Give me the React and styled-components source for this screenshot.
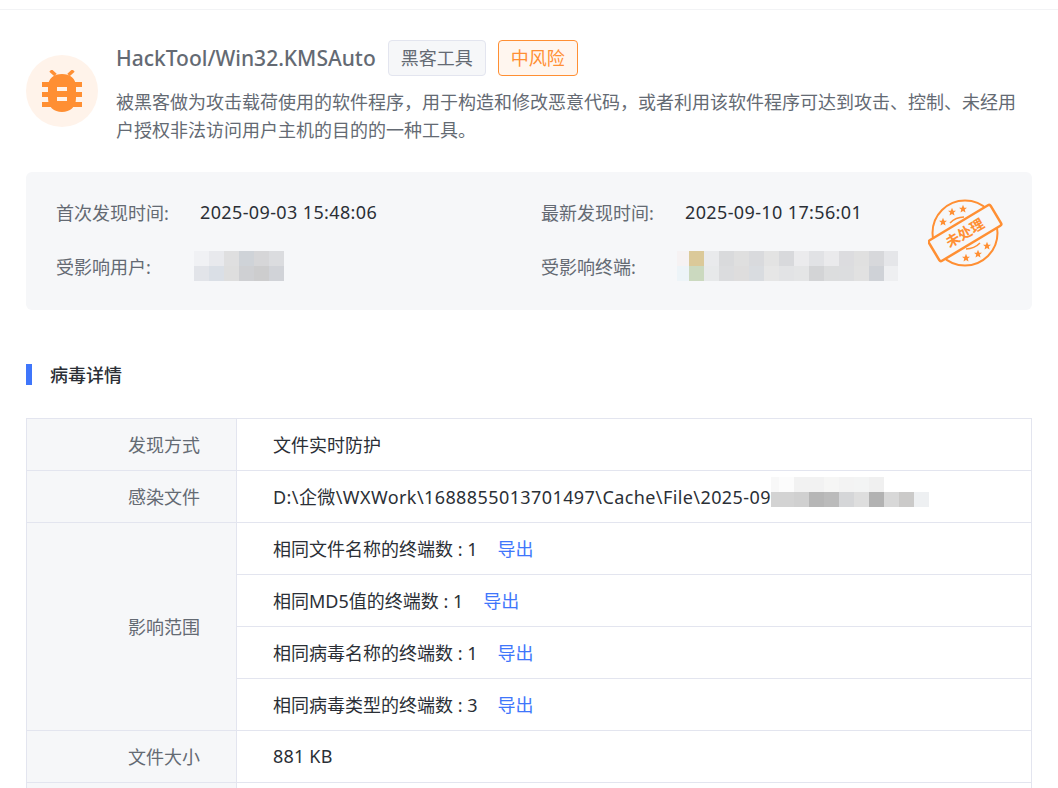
import React from "react";
import styled, { createGlobalStyle } from "styled-components";

const font = `"Noto Sans", "Noto Sans CJK SC", sans-serif`;

const GlobalStyle = createGlobalStyle`
  html, body {
    margin: 0;
    height: 788px;
    overflow: hidden;
    background: #fff;
    font-family: ${font};
  }
`;

const Page = styled.main`
  border-top: 1px solid #f2f3f5;
  margin-top: 9px;
  padding: 30px 26px 0;
`;

const Header = styled.header`
  display: flex;
  gap: 18px;
`;

const IconCircle = styled.div`
  width: 72px;
  height: 72px;
  margin-top: 15px;
  flex: none;
  border-radius: 50%;
  background: #fff3ea;
  display: flex;
  align-items: center;
  justify-content: center;
`;

const HeaderBody = styled.div`
  flex: 1;
`;

const TitleRow = styled.div`
  display: flex;
  align-items: center;
  gap: 12px;
  height: 36px;
`;

const Title = styled.h1`
  margin: 0;
  font-size: 21px;
  font-weight: 500;
  color: #646a73;
  line-height: 36px;
`;

const Tag = styled.span`
  box-sizing: border-box;
  height: 36px;
  line-height: 34px;
  padding: 0 12px;
  border-radius: 4px;
  font-size: 18px;
  border: 1px solid ${(p) => (p.$risk ? "#ff8f33" : "#e3e5ef")};
  background: ${(p) => (p.$risk ? "#fff6ef" : "#f6f7f9")};
  color: ${(p) => (p.$risk ? "#ff8f33" : "#646a73")};
`;

const Desc = styled.p`
  margin: 12px 0 0;
  width: 908px;
  font-size: 18px;
  line-height: 28px;
  color: #646a73;
`;

const InfoPanel = styled.section`
  position: relative;
  box-sizing: border-box;
  height: 138px;
  margin-top: 28px;
  padding: 13px 30px;
  background: #f6f7f9;
  border-radius: 6px;
  display: grid;
  grid-template-columns: 485px 1fr;
  grid-auto-rows: 54px;
`;

const InfoItem = styled.div`
  display: flex;
  align-items: center;
  font-size: 18px;
  color: #2b2f36;
`;

const InfoLabel = styled.span`
  width: ${(p) => p.$w || 144}px;
  flex: none;
  color: #646a73;
`;

const Latin = styled.span`
  letter-spacing: ${(p) => p.$spacing || 0.37}px;
`;

const Mosaic = styled.div`
  display: grid;
  grid-template-columns: ${(p) => p.$cols};
  grid-auto-rows: 15px;
  margin-bottom: ${(p) => p.$lift || 0}px;
`;

const MosaicCell = styled.i`
  display: block;
  background: ${(p) => p.$c};
`;

const StampWrap = styled.div`
  position: absolute;
  right: 26px;
  top: 26px;
`;

const SectionTitle = styled.h2`
  margin: 54px 0 0;
  height: 21px;
  line-height: 23px;
  border-left: 6px solid #3f76fb;
  padding-left: 18px;
  font-size: 18px;
  font-weight: 500;
  color: #2b2f36;
`;

const Table = styled.table`
  width: 100%;
  margin-top: 33px;
  border-collapse: collapse;
  table-layout: fixed;
  font-size: 18px;
  td, th {
    height: 49px;
    padding: 0 0 2px;
    border: 1px solid #e3e5ef;
    font-weight: 400;
  }
`;

const Th = styled.th`
  width: 210px;
  box-sizing: border-box;
  padding-right: 36px !important;
  text-align: right;
  background: #f6f7f9;
  color: #646a73;
`;

const Td = styled.td`
  padding-left: 36px !important;
  color: #2b2f36;
  white-space: nowrap;
  overflow: hidden;
`;

const PathCell = styled.div`
  display: flex;
  align-items: center;
`;

const ExportLink = styled.a`
  margin-left: 20px;
  color: #3f76fb;
  cursor: pointer;
`;

const userCells = ["#f0f1f4","#e8e9ed","#dfdfe0","#cfd3d8","#d6d6d8","#dbdcdf","#e2e4e9","#dadfe6","#dedede","#cfd0d3","#cdcdce","#d1d3d8"];
const terminalCells = [
  "#f6f2f3","#dbc999","#e9eaec","#d9dadc","#dfdfdf","#d9dadd","#e3e3e3","#d8d9dc","#ebebed","#e1e2e5","#eaeaec","#dcdcdf","#e0e0e0","#d7d8db","#e5e6e9",
  "#edf4f8","#cbd9bf","#e7e9ea","#dbdcde","#dedddd","#d9dce0","#e6e6e6","#e2e3e5","#e4e5e6","#d3d4d6","#dcddde","#dcdddf","#e1e1e1","#cfd2d7","#eeeff1",
];
const pathCells = [
  "#f8f8f8","#fcfcfc","#f2f2f2","#f2f2f2","#f6f6f5","#f3f3f3","#f3f4f4","#f0f0f0","#fff","#fff","#fff",
  "#d3d3d3","#d3d3d3","#d0d0d0","#b6b6b6","#bbb","#d5d6d8","#dedede","#b2b2b2","#d8d8d8","#cbcac9","#eef0f2",
];

const BugIcon = () => (
  <svg width="40" height="43" viewBox="0 0 40 43" fill="#ff8f33">
    <path d="M0 12h40v5H0zM0 22h40v5H0zM0 32h40v5H0z" />
    <path d="M8.500 0.500 13.500 5M31.500 0.500 26.500 5" stroke="#ff8f33" strokeWidth="3.500" />
    <path
      fillRule="evenodd"
      d="M6 17C6 8 12 4 20 4s14 4 14 13v11c0 9-6 14-14 14S6 37 6 28zM15 16v5h10v-5zM15 27v4h10v-4z"
    />
  </svg>
);

const Star = ({ x, y }) => (
  <path
    transform={`translate(${x} ${y}) scale(0.42)`}
    d="M0-10 2.900-3.100 9.500-3.100 4.300 1.400 5.900 8.100 0 4.500-5.900 8.100-4.300 1.400-9.500-3.100-2.900-3.100z"
  />
);

const StampText = styled.text`
  font-family: "Noto Sans CJK SC", sans-serif;
  font-size: 14px;
  font-weight: 700;
  fill: #ff8f33;
`;

const Stamp = () => (
  <svg width="78" height="70" viewBox="0 0 78 70">
    <g fill="none" stroke="#ff8f33">
      <circle cx="37" cy="35" r="32.500" strokeWidth="2" />
      <path d="M22 25a20 20 0 0 1 14-6M52 45a20 20 0 0 1-14 6" strokeWidth="1.500" />
    </g>
    <g fill="#ff8f33">
      <Star x={15} y={24} />
      <Star x={24} y={14} />
      <Star x={35} y={11} />
      <Star x={38} y={60} />
      <Star x={50} y={56} />
      <Star x={59} y={48} />
    </g>
    <g transform="rotate(-31 37 35)">
      <rect x="1" y="23" width="72" height="24" rx="2" fill="#f6f7f9" stroke="#ff8f33" strokeWidth="2.500" />
      <StampText x="37" y="40" textAnchor="middle">未处理</StampText>
    </g>
  </svg>
);

const ranges = [
  ["相同文件名称的终端数", 1],
  ["相同MD5值的终端数", 1],
  ["相同病毒名称的终端数", 1],
  ["相同病毒类型的终端数", 3],
];

const App = () => (
  <>
    <GlobalStyle />
    <Page>
      <Header>
        <IconCircle>
          <BugIcon />
        </IconCircle>
        <HeaderBody>
          <TitleRow>
            <Title>HackTool/Win32.KMSAuto</Title>
            <Tag>黑客工具</Tag>
            <Tag $risk>中风险</Tag>
          </TitleRow>
          <Desc>
            被黑客做为攻击载荷使用的软件程序，用于构造和修改恶意代码，或者利用该软件程序可达到攻击、控制、未经用户授权非法访问用户主机的目的的一种工具。
          </Desc>
        </HeaderBody>
      </Header>

      <InfoPanel>
        <InfoItem>
          <InfoLabel>首次发现时间:</InfoLabel>
          <Latin>2025-09-03 15:48:06</Latin>
        </InfoItem>
        <InfoItem>
          <InfoLabel>最新发现时间:</InfoLabel>
          <Latin>2025-09-10 17:56:01</Latin>
        </InfoItem>
        <InfoItem>
          <InfoLabel $w={138}>受影响用户:</InfoLabel>
          <Mosaic $cols="repeat(6, 15px)">
            {userCells.map((c, i) => (
              <MosaicCell key={i} $c={c} />
            ))}
          </Mosaic>
        </InfoItem>
        <InfoItem>
          <InfoLabel $w={136}>受影响终端:</InfoLabel>
          <Mosaic $cols="12px repeat(13, 15px) 14px">
            {terminalCells.map((c, i) => (
              <MosaicCell key={i} $c={c} />
            ))}
          </Mosaic>
        </InfoItem>
        <StampWrap>
          <Stamp />
        </StampWrap>
      </InfoPanel>

      <SectionTitle>病毒详情</SectionTitle>

      <Table>
        <tbody>
          <tr>
            <Th>发现方式</Th>
            <Td>文件实时防护</Td>
          </tr>
          <tr>
            <Th>感染文件</Th>
            <Td>
              <PathCell>
                <Latin $spacing={0.41}>D:\企微\WXWork\1688855013701497\Cache\File\2025-09</Latin>
                <Mosaic $cols="8px repeat(10, 15px)" $lift={8}>
                  {pathCells.map((c, i) => (
                    <MosaicCell key={i} $c={c} />
                  ))}
                </Mosaic>
              </PathCell>
            </Td>
          </tr>
          {ranges.map(([label, count], i) => (
            <tr key={label}>
              {i === 0 && <Th rowSpan={4}>影响范围</Th>}
              <Td>
                {label} : {count}
                <ExportLink>导出</ExportLink>
              </Td>
            </tr>
          ))}
          <tr>
            <Th>文件大小</Th>
            <Td>
              <Latin $spacing={0.2}>881 KB</Latin>
            </Td>
          </tr>
          <tr>
            <Th />
            <Td />
          </tr>
        </tbody>
      </Table>
    </Page>
  </>
);

export default App;
